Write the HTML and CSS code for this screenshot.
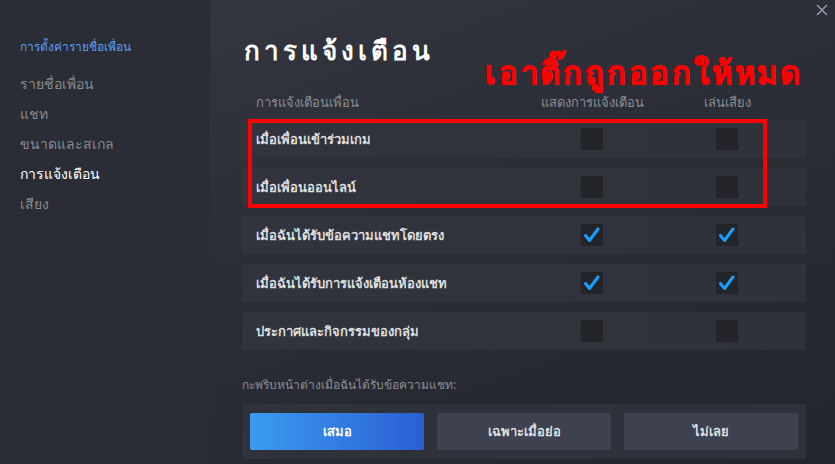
FILE: index.html
```html
<!DOCTYPE html>
<html lang="th">
  <head>
    <meta charset="UTF-8" />
    <meta name="viewport" content="width=device-width, initial-scale=1.0" />
    <title>การแจ้งเตือน</title>
    <link rel="stylesheet" href="styles.css">
  </head>
  <body>
    <div class="window">
      <div class="sidebar">
        <div class="side-title">การตั้งค่ารายชื่อเพื่อน</div>
        <div class="side-item">รายชื่อเพื่อน</div>
        <div class="side-item">แชท</div>
        <div class="side-item">ขนาดและสเกล</div>
        <div class="side-item active">การแจ้งเตือน</div>
        <div class="side-item">เสียง</div>
      </div>

      <div class="main">
        <button class="close" title="ปิด">
          <svg width="12" height="12" viewBox="0 0 12 12">
            <path d="M1 1 L11 11 M11 1 L1 11" stroke="#8b9aa6" stroke-width="1.6" fill="none" />
          </svg>
        </button>

        <h1 class="title">การแจ้งเตือน</h1>
        <div class="note">เอาติ๊กถูกออกให้หมด</div>

        <div class="grid-row header">
          <div class="label">การแจ้งเตือนเพื่อน</div>
          <div class="col">แสดงการแจ้งเตือน</div>
          <div class="col">เล่นเสียง</div>
        </div>

        <div class="group">
          <div class="grid-row item">
            <div class="label">เมื่อเพื่อนเข้าร่วมเกม</div>
            <div class="col"><span class="check"></span></div>
            <div class="col"><span class="check"></span></div>
          </div>
          <div class="grid-row item">
            <div class="label">เมื่อเพื่อนออนไลน์</div>
            <div class="col"><span class="check"></span></div>
            <div class="col"><span class="check"></span></div>
          </div>
          <div class="highlight"></div>
        </div>

        <div class="grid-row item">
          <div class="label">เมื่อฉันได้รับข้อความแชทโดยตรง</div>
          <div class="col"><span class="check on"><svg viewBox="0 0 22 22"><path d="M4.5 11.5 L8.5 16.5 L17 5" /></svg></span></div>
          <div class="col"><span class="check on"><svg viewBox="0 0 22 22"><path d="M4.5 11.5 L8.5 16.5 L17 5" /></svg></span></div>
        </div>
        <div class="grid-row item">
          <div class="label">เมื่อฉันได้รับการแจ้งเตือนห้องแชท</div>
          <div class="col"><span class="check on"><svg viewBox="0 0 22 22"><path d="M4.5 11.5 L8.5 16.5 L17 5" /></svg></span></div>
          <div class="col"><span class="check on"><svg viewBox="0 0 22 22"><path d="M4.5 11.5 L8.5 16.5 L17 5" /></svg></span></div>
        </div>
        <div class="grid-row item">
          <div class="label">ประกาศและกิจกรรมของกลุ่ม</div>
          <div class="col"><span class="check"></span></div>
          <div class="col"><span class="check"></span></div>
        </div>

        <div class="flash-label">กะพริบหน้าต่างเมื่อฉันได้รับข้อความแชท:</div>
        <div class="flash-options">
          <button class="option selected">เสมอ</button>
          <button class="option">เฉพาะเมื่อย่อ</button>
          <button class="option">ไม่เลย</button>
        </div>
      </div>
    </div>
  </body>
</html>
```

FILE: styles.css
```css
body {
  margin: 0;
  font-family: "Noto Sans", "Liberation Sans", sans-serif;
  background: #24272e;
  overflow: hidden;
}
.window {
  display: flex;
  width: 835px;
  height: 464px;
}
.sidebar {
  width: 210px;
  flex-shrink: 0;
  background: #2a2d35;
  padding: 38px 0 0 20px;
  box-sizing: border-box;
}
.side-title {
  color: #5c9df0;
  font-size: 12px;
  line-height: 18px;
  margin-bottom: 13px;
}
.side-item {
  color: #878a90;
  font-size: 14px;
  line-height: 30px;
}
.side-item.active {
  color: #ffffff;
}
.main {
  position: relative;
  flex: 1;
  padding: 34px 29px 0 32px;
  background: linear-gradient(160deg, #33363f 0%, #2a2d35 45%, #23262d 100%);
}
.close {
  position: absolute;
  top: 4px;
  right: 7px;
  background: none;
  border: 0;
  padding: 0;
  width: 12px;
  height: 12px;
}
.title {
  margin: 0 0 0 2px;
  color: #ffffff;
  font-size: 26px;
  line-height: 32px;
  font-weight: bold;
  letter-spacing: 4px;
}
.note {
  position: absolute;
  left: 275px;
  top: 54px;
  color: #ff0000;
  font-size: 31px;
  font-weight: 900;
  line-height: 36px;
  letter-spacing: 2.8px;
  -webkit-text-stroke: 0.8px #ff0000;
}
.grid-row {
  display: grid;
  grid-template-columns: 1fr 100px 100px;
  column-gap: 35px;
  padding: 0 29px 0 14px;
  align-items: center;
}
.header {
  height: 22px;
  margin-top: 25px;
  margin-bottom: 7px;
  color: #8a8d93;
  font-size: 13px;
}
.col {
  display: flex;
  justify-content: center;
  white-space: nowrap;
}
.item {
  height: 38px;
  margin-bottom: 10px;
  background: linear-gradient(90deg, #31343d, #2f323b);
  color: #dcdedf;
  font-size: 13px;
  font-weight: bold;
}
.group {
  position: relative;
}
.highlight {
  position: absolute;
  top: -1px;
  bottom: -2px;
  left: 6px;
  right: 39px;
  border: 4px solid #ff0000;
}
.check {
  display: block;
  width: 22px;
  height: 22px;
  border-radius: 2px;
  background: #23252b;
  box-shadow: inset 0 0 0 1px #202228;
}
.check svg {
  display: block;
  width: 22px;
  height: 22px;
}
.check path {
  fill: none;
  stroke: #1a9fff;
  stroke-width: 3;
  stroke-linecap: round;
  stroke-linejoin: round;
}
.flash-label {
  margin-top: 26px;
  color: #8a8d93;
  font-size: 12px;
  line-height: 18px;
}
.flash-options {
  display: flex;
  gap: 13px;
  margin-top: 10px;
  padding: 9px 8px 9px 8px;
  background: #2f323a;
}
.option {
  flex: 1;
  height: 37px;
  border: 0;
  border-radius: 2px;
  background: #3d4150;
  color: #dcdedf;
  font-family: inherit;
  font-size: 13px;
  font-weight: bold;
}
.option.selected {
  background: linear-gradient(90deg, #3a9bf0, #2a5fd4);
  color: #ffffff;
}
```
